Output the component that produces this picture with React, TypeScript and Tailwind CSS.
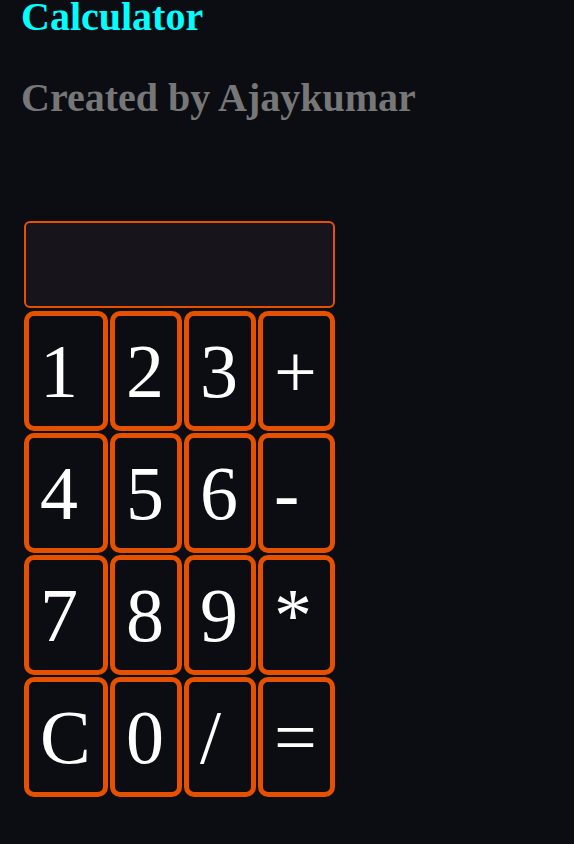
import React from "react";

const rows = [
  ["1", "2", "3", "+"],
  ["4", "5", "6", "-"],
  ["7", "8", "9", "*"],
  ["C", "0", "/", "="],
];

export default function App() {
  return (
    <div
      className="min-h-[844px] w-full bg-[#0b0d12] pl-[21px]"
      style={{ fontFamily: '"Liberation Serif", "Times New Roman", serif' }}
    >
      <h1 className="m-0 text-[40px] font-bold leading-[33px] text-[#00ffff]">Calculator</h1>
      <h2 className="mt-[48px] mb-0 text-[40px] font-bold leading-[33px] text-[#777777]">
        Created by Ajaykumar
      </h2>
      <div className="ml-[3px] mt-[107px] flex w-[311px] flex-col gap-[3px]">
        <div className="h-[87px] w-[311px] rounded-[6px] border-2 border-[#e65100] bg-[#17141b]" />
        <div className="grid grid-cols-[84px_72px_72px_77px] auto-rows-[120px] gap-x-[2px] gap-y-[2px]">
          {rows.flat().map((k) => (
            <button
              key={k}
              className="flex items-center rounded-[10px] border-[5px] border-[#e65100] bg-[#0b0d12] pl-[11px] text-[76px] leading-none text-white"
              style={{ fontFamily: '"Liberation Serif", "Times New Roman", serif' }}
            >
              {k}
            </button>
          ))}
        </div>
      </div>
    </div>
  );
}
